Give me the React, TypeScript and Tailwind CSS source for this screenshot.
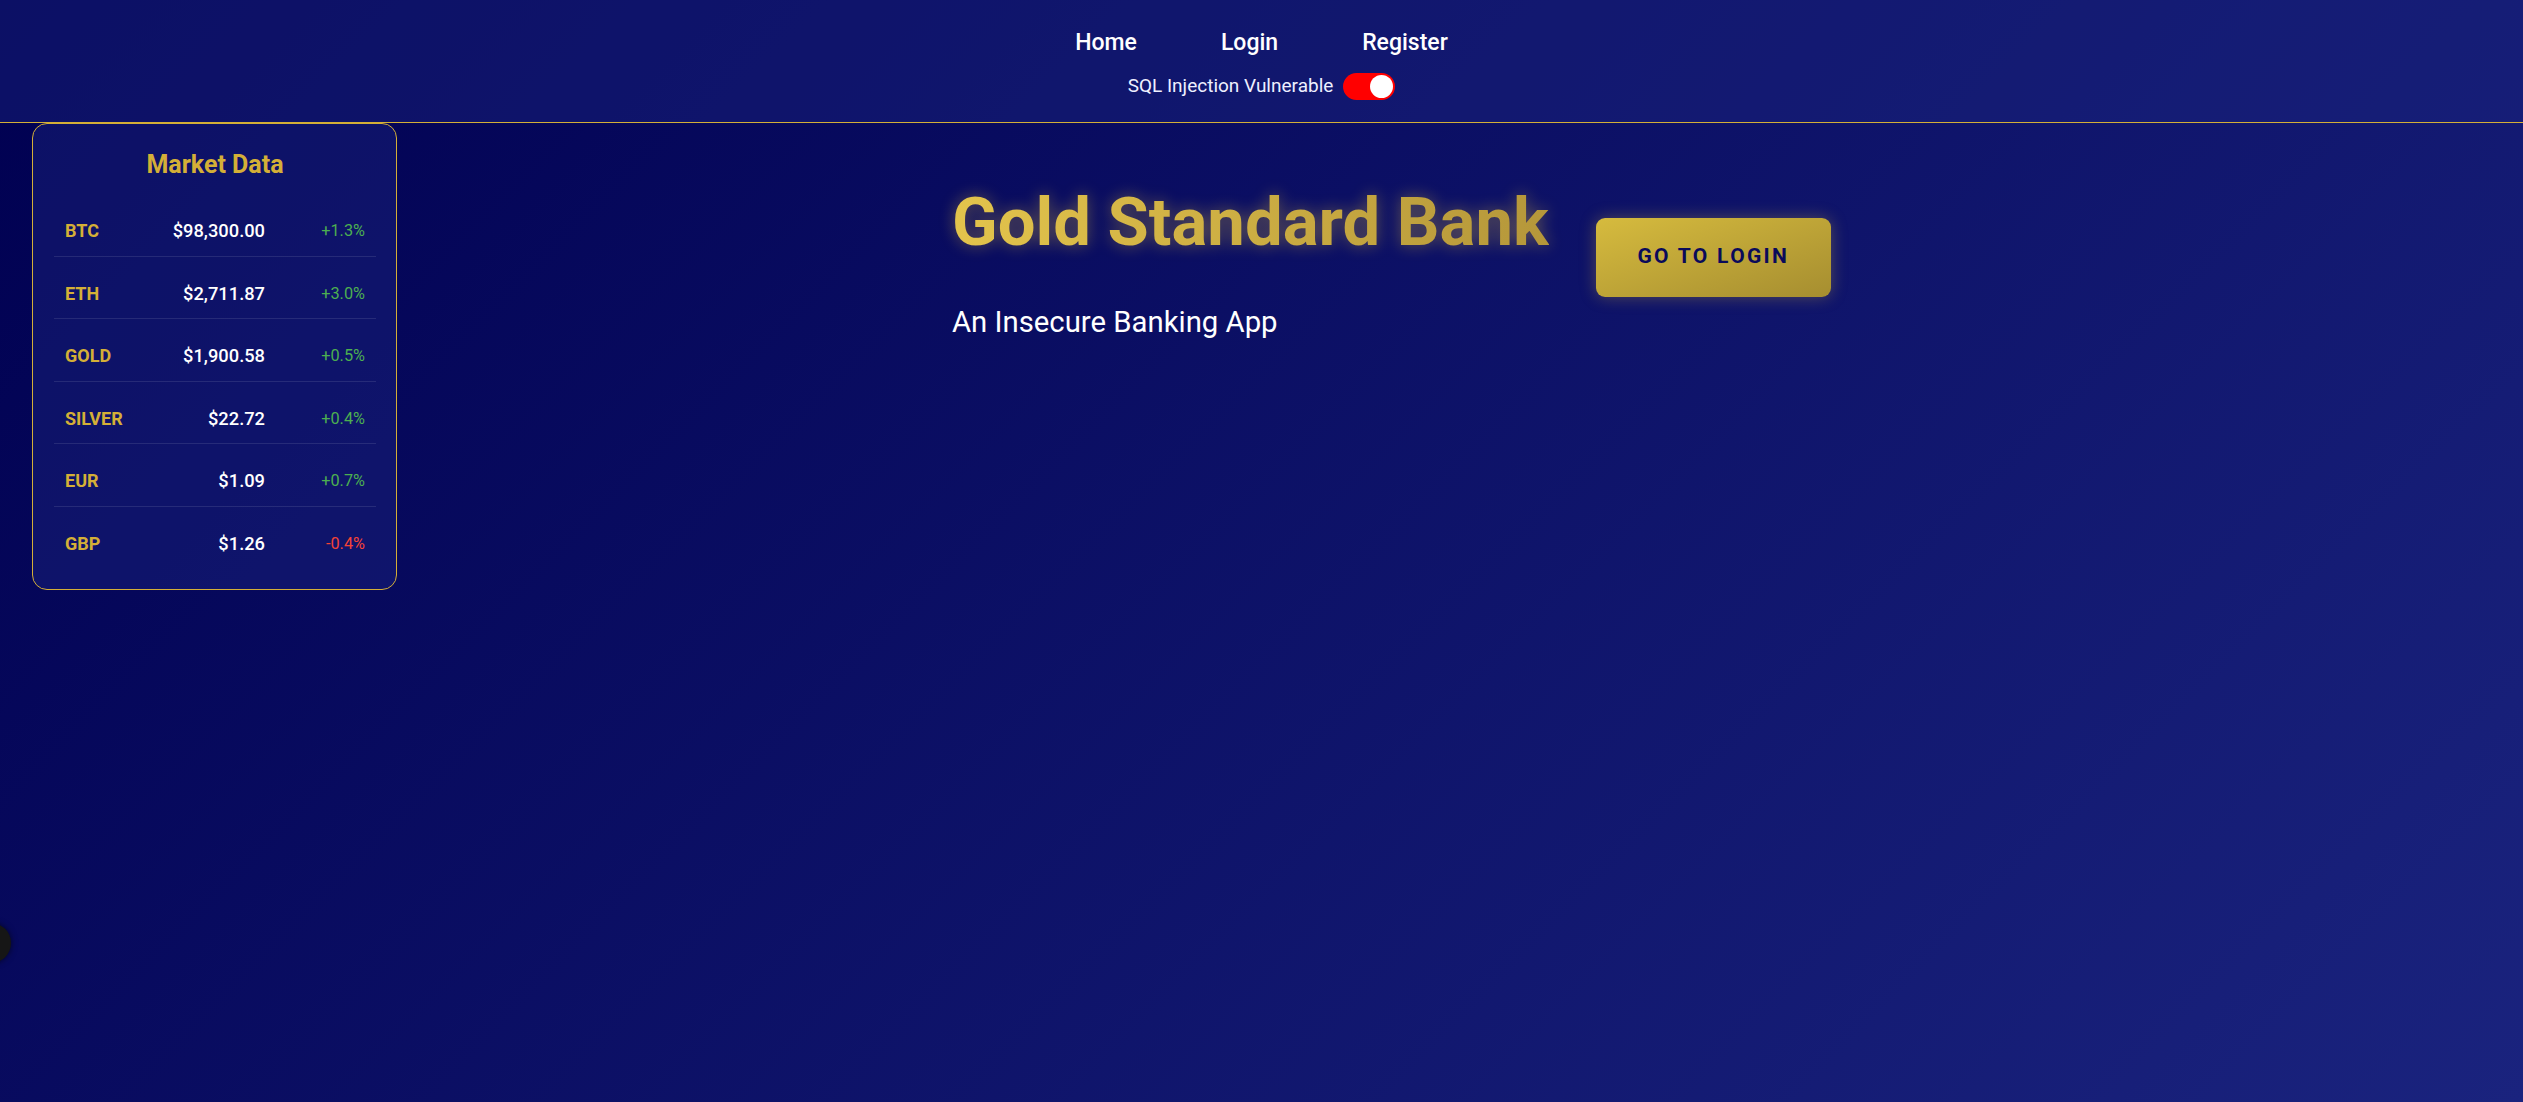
import React from 'react'

const MARKET = [
  { symbol: 'BTC', price: '$98,300.00', change: '+1.3%', up: true },
  { symbol: 'ETH', price: '$2,711.87', change: '+3.0%', up: true },
  { symbol: 'GOLD', price: '$1,900.58', change: '+0.5%', up: true },
  { symbol: 'SILVER', price: '$22.72', change: '+0.4%', up: true },
  { symbol: 'EUR', price: '$1.09', change: '+0.7%', up: true },
  { symbol: 'GBP', price: '$1.26', change: '-0.4%', up: false },
]

export default function App() {
  return (
    <div className="relative h-[1102px] w-full overflow-hidden bg-[linear-gradient(135deg,#000051_0%,#1a237e_100%)] font-['Roboto',sans-serif]">
      <Navbar />

      <div className="flex items-start">
        <MarketData />

        <main className="ml-[555px] mt-[59px] flex items-start">
          <div>
            <h1 className="bg-gradient-to-r from-[#e3c44c] to-[#b5973a] bg-clip-text text-[67px] font-bold leading-[1.2] text-transparent drop-shadow-[0_0_8px_rgba(212,175,55,0.45)]">
              Gold Standard Bank
            </h1>
            <p className="mt-[39px] text-[29.3px] leading-[1.5] text-white">An Insecure Banking App</p>
          </div>
          <button className="ml-[47px] mt-[36px] h-[79px] w-[235px] rounded-[9px] bg-gradient-to-br from-[#d6bb3e] to-[#a68e30] text-[21px] font-bold tracking-[2.3px] text-[#0a0a5a] shadow-[0_0_16px_rgba(212,175,55,0.35)]">
            GO TO LOGIN
          </button>
        </main>
      </div>

      {/* floating widget peeking in from the left edge */}
      <div className="absolute left-[-29px] top-[923px] h-[40px] w-[40px] rounded-full bg-[#161616] shadow-[0_0_6px_rgba(0,0,0,0.6)]" />
    </div>
  )
}

function Navbar() {
  return (
    <nav className="flex flex-col items-center border-b border-[#d4af37] bg-[rgba(26,35,126,0.45)] pb-[21px] pt-[29px]">
      <div className="flex gap-[84px] text-[23px] font-medium leading-[28px] text-white">
        <a href="#">Home</a>
        <a href="#">Login</a>
        <a href="#">Register</a>
      </div>
      <div className="mt-[15px] flex items-center gap-[10px]">
        <span className="text-[19px] text-[#eef0ff]">SQL Injection Vulnerable</span>
        <div className="relative h-[27px] w-[52px] rounded-full bg-[#ff0000]">
          <span className="absolute right-[2px] top-[2px] h-[23px] w-[23px] rounded-full bg-white" />
        </div>
      </div>
    </nav>
  )
}

function MarketData() {
  return (
    <aside className="ml-[32px] w-[365px] rounded-[15px] border border-[#d4af37] bg-[rgba(26,35,126,0.45)] pb-[21px] pl-[21px] pr-[20px] pt-[27px]">
      <h3 className="mb-[27px] text-center text-[25px] font-bold leading-[28.8px] text-[#d4af37]">Market Data</h3>
      {MARKET.map((m, i) => (
        <div
          key={m.symbol}
          className={
            i === MARKET.length - 1
              ? 'grid grid-cols-3 items-center px-[11px] py-[12px] leading-[25.5px]'
              : 'mb-[12px] grid grid-cols-3 items-center border-b border-white/10 px-[11px] py-[12px] leading-[25.5px]'
          }
        >
          <span className="text-[18px] font-bold text-[#d4af37]">{m.symbol}</span>
          <span className="text-right text-[18.3px] font-medium text-white">{m.price}</span>
          <span className={m.up ? 'text-right text-[16.3px] text-[#4caf50]' : 'text-right text-[16.3px] text-[#f44336]'}>
            {m.change}
          </span>
        </div>
      ))}
    </aside>
  )
}
